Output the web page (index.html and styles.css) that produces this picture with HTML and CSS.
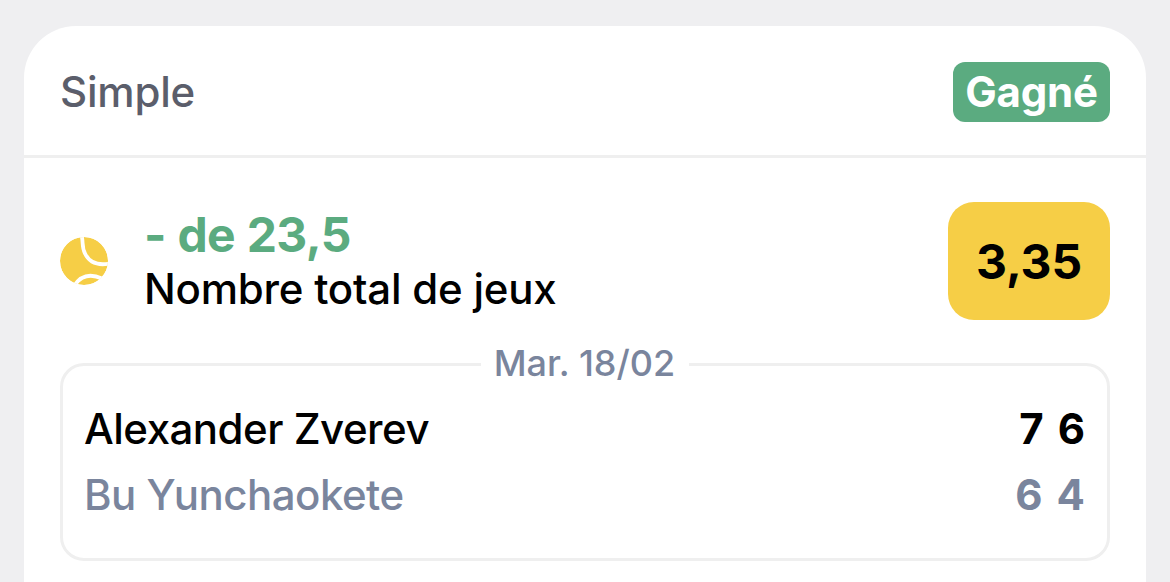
FILE: index.html
```html
<!DOCTYPE html>
<html lang="fr">
<head>
  <meta charset="UTF-8">
  <title>Pari simple</title>
  <link rel="stylesheet" href="styles.css">
</head>
<body>
  <div class="card">
    <!-- Bet type and status -->
    <div class="card-header">
      <span class="bet-type">Simple</span>
      <span class="status">Gagné</span>
    </div>

    <div class="card-body">
      <!-- Selection and odds -->
      <div class="bet">
        <svg class="ball" viewBox="0 0 48 48">
          <clipPath id="ball-clip"><circle cx="24" cy="24" r="24" /></clipPath>
          <g clip-path="url(#ball-clip)">
            <circle cx="24" cy="24" r="24" fill="#f6ce46" />
            <path d="M21.5 -2 C23.5 5 21.5 10 25 16.5 C29 25 37 29 50 26.5" fill="none" stroke="#fff" stroke-width="3.8" />
            <path d="M14 49 C21 38 31 36.5 42 41.5" fill="none" stroke="#fff" stroke-width="3.8" />
          </g>
        </svg>
        <div class="bet-text">
          <div class="selection">- de 23,5</div>
          <div class="market">Nombre total de jeux</div>
        </div>
        <div class="odds">3,35</div>
      </div>

      <!-- Match result -->
      <fieldset class="match">
        <legend>Mar. 18/02</legend>
        <div class="player winner">
          <span class="name">Alexander Zverev</span>
          <span class="sets"><span>7</span><span>6</span></span>
        </div>
        <div class="player">
          <span class="name">Bu Yunchaokete</span>
          <span class="sets"><span>6</span><span>4</span></span>
        </div>
      </fieldset>
    </div>
  </div>
</body>
</html>
```
FILE: styles.css
```css
* {
  box-sizing: border-box;
  margin: 0;
  padding: 0;
}
body {
  font-family: Inter, "Liberation Sans", sans-serif;
  font-size: 42px;
  background-color: #efeff1;
  color: #000;
  padding: 26px 24px 0;
}

.card {
  height: 556px;
  background-color: #fff;
  border-radius: 52px 52px 0 0;
}

/* Header */
.card-header {
  display: flex;
  justify-content: space-between;
  align-items: center;
  padding: 36px 36px 33px;
  border-bottom: 3px solid #efefef;
}
.bet-type {
  line-height: 60px;
  color: #5b5e6b;
  font-weight: 500;
  letter-spacing: -0.2px;
}
.status {
  width: 157px;
  line-height: 60px;
  border-radius: 12px;
  background-color: #5bab80;
  color: #fff;
  font-weight: 700;
  letter-spacing: -0.2px;
  text-align: center;
}

/* Selection row */
.card-body {
  padding: 44px 36px 0;
}
.bet {
  display: flex;
  align-items: center;
  height: 118px;
}
.ball {
  width: 48px;
  height: 48px;
  margin-right: 36px;
}
.bet-text {
  flex: 1;
}
.selection {
  font-size: 48px;
  line-height: 56px;
  font-weight: 700;
  letter-spacing: -0.6px;
  word-spacing: 0.8px;
  color: #5bab80;
}
.market {
  line-height: 51px;
  padding-bottom: 2px;
  font-weight: 500;
  letter-spacing: -0.22px;
}
.odds {
  width: 162px;
  padding-top: 2px;
  line-height: 116px;
  border-radius: 26px;
  background-color: #f6ce46;
  font-size: 48px;
  font-weight: 700;
  letter-spacing: -0.2px;
  text-align: center;
}

/* Match box */
.match {
  margin-top: 23px;
  padding: 10px 22px 30px;
  border: 3px solid #efefef;
  border-radius: 24px;
}
.match legend {
  width: 208px;
  margin: 0 auto;
  padding: 0 1px 2px 0;
  font-size: 36px;
  line-height: 41px;
  font-weight: 500;
  color: #7a859d;
  text-align: center;
}
.player {
  display: flex;
  justify-content: space-between;
  line-height: 66px;
  font-weight: 500;
  color: #7a859d;
}
.winner {
  color: #000;
}
.name {
  margin-left: -1px;
  letter-spacing: -0.5px;
}
.sets {
  display: flex;
  gap: 14px;
  font-weight: 700;
}
```
